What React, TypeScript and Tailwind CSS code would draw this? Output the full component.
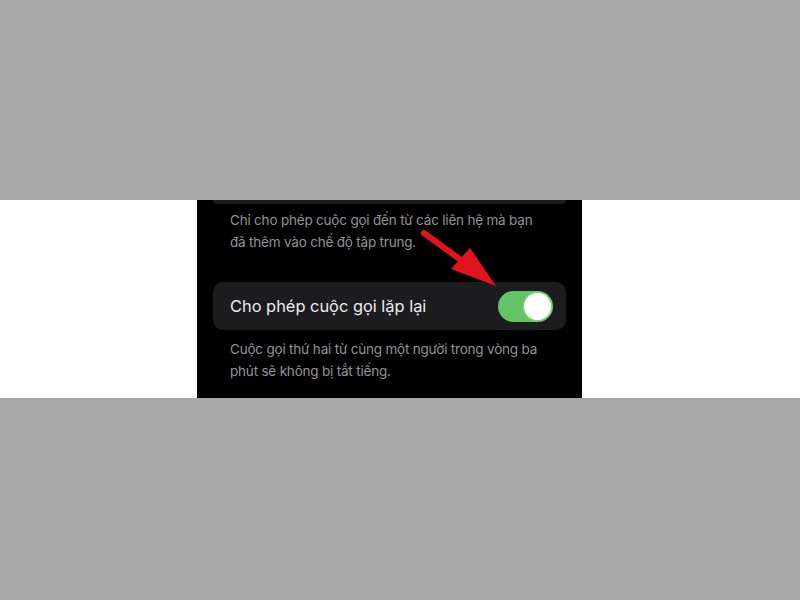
import React from "react";

const font = { fontFamily: "Inter, 'Noto Sans', sans-serif" };

// red annotation arrow pointing at the switch
const Arrow = () => (
  <svg
    className="absolute left-0 top-0 pointer-events-none"
    width={385}
    height={198}
    viewBox="0 0 385 198"
  >
    <line x1={227} y1={33} x2={264} y2={60} stroke="#e0141c" strokeWidth={6} strokeLinecap="round" />
    <polygon points="254,69 273,48 299,86" fill="#e0141c" />
  </svg>
);

const Toggle = ({ on }: { on: boolean }) => (
  <div
    className={`w-[55px] h-[31px] rounded-full p-[2px] flex items-center ${
      on ? "bg-[#62c463] justify-end" : "bg-[#39393d] justify-start"
    }`}
  >
    <div className="w-[27px] h-[27px] rounded-full bg-white shadow-[0_0_3px_rgba(255,255,255,0.6)]" />
  </div>
);

export default function App() {
  return (
    <div className="w-[800px] h-[600px] flex flex-col bg-[#a8a8a8]" style={font}>
      <div className="h-[200px]" />
      <div className="h-[198px] bg-white pl-[197px]">
        <div className="relative w-[385px] h-full bg-black overflow-hidden">
          <div className="mx-4 h-[4px] rounded-b-[10px] bg-[#1c1c1e]" />

          <p className="mt-[5px] pl-[33px] whitespace-nowrap text-[13.5px] tracking-[-0.2px] leading-[22px] text-[#929297]">
            Chỉ cho phép cuộc gọi đến từ các liên hệ mà bạn
            <br />
            đã thêm vào chế độ tập trung.
          </p>

          <div className="mt-[29px] mx-4 h-[48px] rounded-[10px] bg-[#1c1c1e] pl-[17px] pr-[13px] flex items-center justify-between">
            <span className="text-[16.4px] text-[#ececf0]">Cho phép cuộc gọi lặp lại</span>
            <Toggle on />
          </div>

          <p className="mt-[8px] pl-[33px] whitespace-nowrap text-[13.5px] tracking-[-0.2px] leading-[22px] text-[#929297]">
            Cuộc gọi thứ hai từ cùng một người trong vòng ba
            <br />
            phút sẽ không bị tắt tiếng.
          </p>

          <Arrow />
        </div>
      </div>
    </div>
  );
}
